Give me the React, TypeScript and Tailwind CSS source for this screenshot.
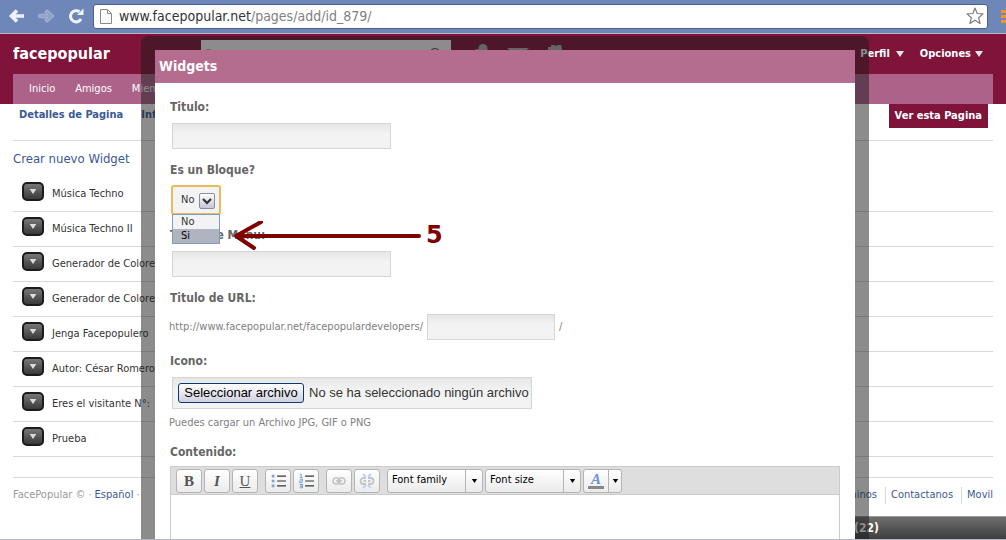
import { useRef, useState } from "react";
import type { ReactNode } from "react";

const widgets = [
  "Música Techno",
  "Música Techno II",
  "Generador de Colores",
  "Generador de Colores",
  "Jenga Facepopulero",
  "Autor: César Romero",
  "Eres el visitante N°:",
  "Prueba",
];

const fieldClass =
  "block h-[26px] border border-[#d6d6d6] bg-linear-to-b from-[#e6e6e6] to-[#f3f3f3] to-40% px-2 outline-none";

const toolClass =
  "flex h-6 items-center justify-center rounded-[3px] border border-[#b4b4b4] bg-linear-to-b from-white to-[#ebebeb]";

const Triangle = ({ className }: { className?: string }) => (
  <svg viewBox="0 0 8 6" className={className} fill="currentColor">
    <path d="M0 0h8L4 6z" />
  </svg>
);

const BrowserBar = () => {
  const [url, setUrl] = useState("/pages/add/id_879/");

  return (
    <div className="flex h-[34px] shrink-0 items-center border-b border-[#b9b9bf] bg-[#6f87b8] pb-px">
      <button type="button" aria-label="Atrás" className="ml-2 text-[#eef2fa]">
        <svg viewBox="0 0 18 16" className="h-4 w-[18px]" fill="none" stroke="currentColor" strokeWidth="3.6">
          <path d="M9 2.500 3.500 8 9 13.500M4 8h12" />
        </svg>
      </button>
      <button type="button" aria-label="Adelante" className="ml-3 text-[#9fb0d3]">
        <svg viewBox="0 0 18 16" className="h-4 w-[18px]" fill="#8a9fca" stroke="currentColor" strokeWidth="1.400">
          <path d="M1 6.500h8.500L7 4l2-2 6.500 6L9 14l-2-2 2.500-2.500H1z" />
        </svg>
      </button>
      <button type="button" aria-label="Recargar" className="ml-3 text-[#eef2fa]">
        <svg viewBox="0 0 16 16" className="size-4" fill="none">
          <path d="M13 11A5.600 5.600 0 1 1 11.500 3.800" stroke="currentColor" strokeWidth="3" />
          <path d="M15.500 .5v6.500H9z" fill="currentColor" />
        </svg>
      </button>
      <div className="ml-[9px] mr-[15px] flex h-[25px] flex-1 items-center rounded-[3px] border border-[#4a608f] bg-white pl-1.5 pr-[3px] text-sm">
        <svg viewBox="0 0 12 15" className="mr-[7px] h-[15px] w-3" fill="#fafafa" stroke="#8a8a8a">
          <path d="M.5.5h7l4 4v10H.5zM7.500.5v4h4" />
        </svg>
        <span>www.facepopular.net</span>
        <input
          aria-label="Dirección"
          value={url}
          onChange={(e) => setUrl(e.target.value)}
          className="min-w-0 flex-1 text-[#808080] outline-none"
        />
        <button type="button" aria-label="Favorito">
          <svg viewBox="0 0 18 18" className="size-[18px]" fill="white" stroke="#7d7d7d" strokeWidth="1.200" strokeLinejoin="round">
            <path d="M9 1l2.200 5.500 5.800.4-4.400 3.800 1.500 5.800L9 13.300l-5.100 3.200 1.500-5.800L1 6.900l5.800-.4z" />
          </svg>
        </button>
      </div>
      <button type="button" aria-label="Menú" className="-ml-0.5 flex w-[5px] flex-col gap-0.5">
        <span className="h-[3px] bg-[#f7931e]" />
        <span className="h-[3px] bg-[#f7931e]" />
        <span className="h-[3px] bg-[#f7931e]" />
      </button>
    </div>
  );
};

const SiteHeader = () => (
  <header className="bg-[#801339] px-[13px] text-white">
    <div className="flex h-10 items-center">
      <a href="#" className="w-[188px] text-base font-bold">
        facepopular
      </a>
      <div className="flex h-7 w-[250px] items-center justify-between bg-white px-1 text-[#777]">
        <input aria-label="Buscar" placeholder="Buscar" className="w-40 text-sm outline-none" />
        <svg viewBox="0 0 14 14" className="mr-1 size-3.5" fill="none" stroke="currentColor" strokeWidth="1.500">
          <circle cx="6" cy="6" r="4.500" />
          <path d="m9.500 9.500 4 4" />
        </svg>
      </div>
      <div className="ml-[22px] flex gap-[18px] text-[#b0b0b0]">
        <svg viewBox="0 0 16 20" className="h-5 w-4" fill="currentColor">
          <circle cx="10" cy="4.500" r="4.500" />
          <circle cx="4" cy="7" r="2" />
          <path d="M1 20c0-12 15-12 15 0z" />
        </svg>
        <svg viewBox="0 0 22 20" className="h-5 w-[22px]" fill="currentColor">
          <path d="M0 4h22L11 13zM0 6l11 9 11-9v12H0z" />
        </svg>
        <svg viewBox="0 0 16 20" className="h-5 w-4" fill="currentColor">
          <path d="M1 3h3V1h3l2 1 2-1h3l1 4v12H1z" />
        </svg>
      </div>
      <div className="mr-2.5 ml-auto flex gap-4 text-[11px] leading-4 font-bold">
        <a href="#" className="flex items-center gap-1.5">
          Perfil <Triangle className="h-1.5 w-2 text-[#e5e5e5]" />
        </a>
        <a href="#" className="flex items-center gap-1">
          Opciones <Triangle className="h-1.5 w-2 text-[#e5e5e5]" />
        </a>
      </div>
    </div>
    <nav className="flex h-[30px] items-center gap-5 bg-[#ad628a] px-4 text-[11px]">
      <a href="#">Inicio</a>
      <a href="#">Amigos</a>
      <a href="#">Miembros</a>
    </nav>
  </header>
);

const WidgetRow = ({ name }: { name: string }) => (
  <li className="flex h-[35px] items-center gap-2 border-b border-[#d9d9d9] pl-[9px] text-[11px]">
    <button
      type="button"
      aria-label={`Opciones de ${name}`}
      className="mb-1.5 flex h-[19px] w-[22px] items-center justify-center rounded-[5px] border-2 border-[#1c1c1c] bg-linear-to-b from-[#777] to-[#3a3a3a]"
    >
      <Triangle className="h-[5px] w-2 text-[#ddd]" />
    </button>
    <a href="#">{name}</a>
  </li>
);

const Page = () => (
  <div>
    <SiteHeader />
    <main className="mx-[13px]">
      <div className="flex h-[37px] items-start justify-between border-b border-[#d9d9d9] pr-[5px] pl-1.5 text-[11px] font-bold">
        <div className="flex gap-[18px] leading-[22px] text-[#3b5998]">
          <a href="#">Detalles de Pagina</a>
          <a href="#">Información</a>
        </div>
        <button type="button" className="h-6 bg-[#801339] px-1.5 text-white">
          Ver esta Pagina
        </button>
      </div>
      <a href="#" className="flex h-9 items-center text-[13px] text-[#3b5998]">
        Crear nuevo Widget
      </a>
      <ul>
        {widgets.map((name, i) => (
          <WidgetRow key={i} name={name} />
        ))}
      </ul>
    </main>
    <footer className="mx-[13px] mt-5 flex h-10 items-center justify-between border-t border-[#d9d9d9] pb-1 text-[11px] text-[#3b5998]">
      <div className="flex gap-[3px] text-[#999]">
        <span>FacePopular ©</span>·
        <a href="#" className="text-[#3b5998]">
          Español
        </a>
        ·
      </div>
      <div className="flex divide-x divide-[#d9d9d9]">
        <a href="#" className="pr-2">Terminos</a>
        <a href="#" className="px-[5px] pr-2">Contactanos</a>
        <a href="#" className="pl-[5px]">Movil</a>
      </div>
    </footer>
  </div>
);

const Field = ({ label, id, children }: { label: string; id: string; children: ReactNode }) => (
  <div className="mb-[13px]">
    <label htmlFor={id} className="mb-2 block h-4 text-xs leading-4 font-bold text-[#666]">
      {label}
    </label>
    {children}
  </div>
);

const BlockSelect = () => {
  const [value, setValue] = useState("No");

  return (
    <div className="relative ml-0.5 h-7 w-12">
      <select
        id="block"
        value={value}
        onChange={(e) => setValue(e.target.value)}
        className="block h-7 w-12 appearance-none rounded-[2px] bg-[#f3f3f3] pl-[9px] text-[11px] outline-2 -outline-offset-1 outline-[#eabb5c]"
      >
        <option>No</option>
        <option>Si</option>
      </select>
      <span className="pointer-events-none absolute top-[7px] right-[5px] flex size-4 items-center justify-center rounded-[2px] border border-[#8b8ba0] bg-linear-to-b from-white to-[#c6c6d6]">
        <svg viewBox="0 0 10 7" className="h-[7px] w-2.5" fill="none" stroke="#333" strokeWidth="2.200">
          <path d="m1 1 4 4 4-4" />
        </svg>
      </span>
      <ul
        role="listbox"
        aria-label="Es un Bloque?"
        className="absolute top-7 left-0 z-10 w-12 border border-[#7f9db9] bg-[#f3f3f3] text-[11px] leading-[14px]"
      >
        <li role="option" aria-selected={false} className="pl-2">
          No
        </li>
        <li role="option" aria-selected className="bg-[#b0b4c1] pl-2 text-black">
          Si
        </li>
      </ul>
      {/* step pointer */}
      <div className="absolute top-[35px] left-[60px] z-10 flex items-center text-[#800000]">
        <svg viewBox="0 0 190 30" className="h-[30px] w-[190px]" fill="none" stroke="currentColor" strokeWidth="4" strokeLinecap="round" strokeLinejoin="round">
          <path d="M187 15H4M29 1 4 15l18 12" />
        </svg>
        <b className="ml-1 pb-0.5 font-[DejaVu_Sans] text-2xl leading-6">5</b>
      </div>
    </div>
  );
};

const FileField = () => {
  const input = useRef<HTMLInputElement>(null);
  const [fileName, setFileName] = useState("");

  return (
    <>
      <div className="ml-0.5 flex h-8 w-[360px] items-center gap-[5px] border border-[#d6d6d6] bg-linear-to-b from-[#e6e6e6] to-[#f3f3f3] to-40% pl-[5px] font-[Liberation_Sans] text-[13px] whitespace-nowrap">
        <input
          ref={input}
          id="icon"
          type="file"
          className="hidden"
          onChange={(e) => setFileName(e.target.files?.[0]?.name ?? "")}
        />
        <button
          type="button"
          onClick={() => input.current?.click()}
          className="h-5 w-[126px] shrink-0 rounded-[3px] border border-[#003c74] bg-linear-to-b from-white to-[#d0d0e0] leading-[18px] text-black"
        >
          Seleccionar archivo
        </button>
        <span>{fileName || "No se ha seleccionado ningún archivo"}</span>
      </div>
      <p className="mt-1.5 -ml-px text-[11px] leading-4 text-[#808080]">
        Puedes cargar un Archivo JPG, GIF o PNG
      </p>
    </>
  );
};

const ToolSelect = ({ label }: { label: string }) => (
  <div className="relative">
    <select aria-label={label} className={`${toolClass} w-24 appearance-none pl-1 text-[11px] text-black outline-none`}>
      <option>{label}</option>
    </select>
    <span className="pointer-events-none absolute top-0 right-0 flex h-6 w-[18px] items-center justify-center border-l border-[#b4b4b4]">
      <Triangle className="h-1 w-[7px] text-black" />
    </span>
  </div>
);

const listLines = "M8 3.500h10M8 9h10M8 14.500h10";

const Editor = () => (
  <div className="-mt-0.5 border border-[#ccc]">
    <div className="flex h-7 items-center gap-[7px] border-b border-[#ccc] bg-[#dedede] px-[5px]">
      <div className="flex gap-0.5 font-[Liberation_Serif] text-[15px] leading-5 text-[#555]">
        <button type="button" className={`${toolClass} w-[26px] font-bold`}>B</button>
        <button type="button" className={`${toolClass} w-[26px] font-bold italic`}>I</button>
        <button type="button" className={`${toolClass} w-[26px] underline`}>U</button>
      </div>
      <div className="flex gap-0.5">
        <button type="button" aria-label="Lista" className={`${toolClass} w-[26px]`}>
          <svg viewBox="0 0 18 18" className="h-4 w-4" fill="#7aa3e0">
            <path d="M2 2h3v3H2zM2 7.500h3v3H2zM2 13h3v3H2z" />
            <path d={listLines} stroke="#333" strokeWidth="1.200" />
          </svg>
        </button>
        <button type="button" aria-label="Lista numerada" className={`${toolClass} w-[26px]`}>
          <svg viewBox="0 0 18 18" className="h-4 w-4" fill="none" stroke="#7aa3e0" strokeWidth="1.200">
            <path d="M2 1.500h1.500v3.500M2 5h3M2 7h3v2H2v2h3M2 13h3v3.500H2M2 14.800h3" />
            <path d={listLines} stroke="#333" />
          </svg>
        </button>
      </div>
      <div className="flex gap-0.5">
        <button type="button" aria-label="Enlace" className={`${toolClass} w-[26px]`}>
          <svg viewBox="0 0 16 16" className="size-4" fill="none" stroke="#c4c4c4" strokeWidth="1.600">
            <rect x="2" y="5" width="7" height="6" rx="3" />
            <rect x="7" y="5" width="7" height="6" rx="3" />
            <path d="M5 8h6" />
          </svg>
        </button>
        <button type="button" aria-label="Quitar enlace" className={`${toolClass} w-[26px]`}>
          <svg viewBox="0 0 16 16" className="size-4" fill="none" stroke="#c4c4c4" strokeWidth="1.800">
            <path d="M7 5H4.500a3 3 0 0 0 0 6H7M9 5h2.500a3 3 0 0 1 0 6H9M4.500 8H7M9 8h2.500" />
            <path d="m4 1 3 3M12 1 9 4M4 15l3-3M12 15l-3-3" stroke="#c3d0ea" />
          </svg>
        </button>
      </div>
      <div className="flex gap-0.5">
        <ToolSelect label="Font family" />
        <ToolSelect label="Font size" />
        <button type="button" aria-label="Color de texto" className={`${toolClass} w-[39px]`}>
          <span className="flex w-6 flex-col items-center font-[Liberation_Serif] text-[15px] leading-[14px] font-bold text-[#6c94dc] italic">
            A
            <span className="h-[3px] w-4 bg-[#888]" />
          </span>
          <span className="flex h-full flex-1 items-center justify-center border-l border-[#b4b4b4]">
            <Triangle className="h-1 w-[7px] text-black" />
          </span>
        </button>
      </div>
    </div>
    <textarea id="content" className="block h-40 w-full resize-none p-2 outline-none" />
  </div>
);

const WidgetDialog = () => (
  <section
    role="dialog"
    aria-label="Widgets"
    className="w-[728px] rounded-t-lg bg-[#191919]/50 p-3.5"
  >
    <h2 className="h-[33px] bg-[#b46d8f] pl-1 text-sm leading-[33px] font-bold text-white">Widgets</h2>
    <form className="bg-white px-[15px] pt-4" onSubmit={(e) => e.preventDefault()}>
      <Field label="Titulo:" id="title">
        <input id="title" className={`${fieldClass} ml-0.5 w-[219px]`} />
      </Field>
      <Field label="Es un Bloque?" id="block">
        <BlockSelect />
      </Field>
      <Field label="Titulo de Menu:" id="menu">
        <input id="menu" className={`${fieldClass} ml-0.5 w-[219px]`} />
      </Field>
      <Field label="Titulo de URL:" id="url">
        <div className="-ml-px flex items-center gap-1 text-[11px] text-[#808080]">
          http://www.facepopular.net/facepopulardevelopers/
          <input id="url" className={`${fieldClass} w-32`} />/
        </div>
      </Field>
      <Field label="Icono:" id="icon">
        <FileField />
      </Field>
      <Field label="Contenido:" id="content">
        <Editor />
      </Field>
    </form>
  </section>
);

export default function App() {
  return (
    <div className="flex h-screen flex-col overflow-hidden bg-white font-['DejaVu_Sans_Condensed','DejaVu_Sans',sans-serif] text-[#333]">
      <BrowserBar />
      <div className="relative min-h-0 flex-1 overflow-hidden border-b border-[#b5b5c5]">
        <Page />
        {/* chat bar pinned to the bottom */}
        <div className="absolute right-0 bottom-0 h-[23px] w-[200px] border-t border-[#999] bg-linear-to-b from-[#6e6e6e] to-[#3f3f3f] pl-12 text-xs leading-[22px] font-bold text-white">
          (22)
        </div>
        <div className="absolute inset-x-0 top-0.5 flex justify-center pl-1">
          <WidgetDialog />
        </div>
      </div>
    </div>
  );
}
